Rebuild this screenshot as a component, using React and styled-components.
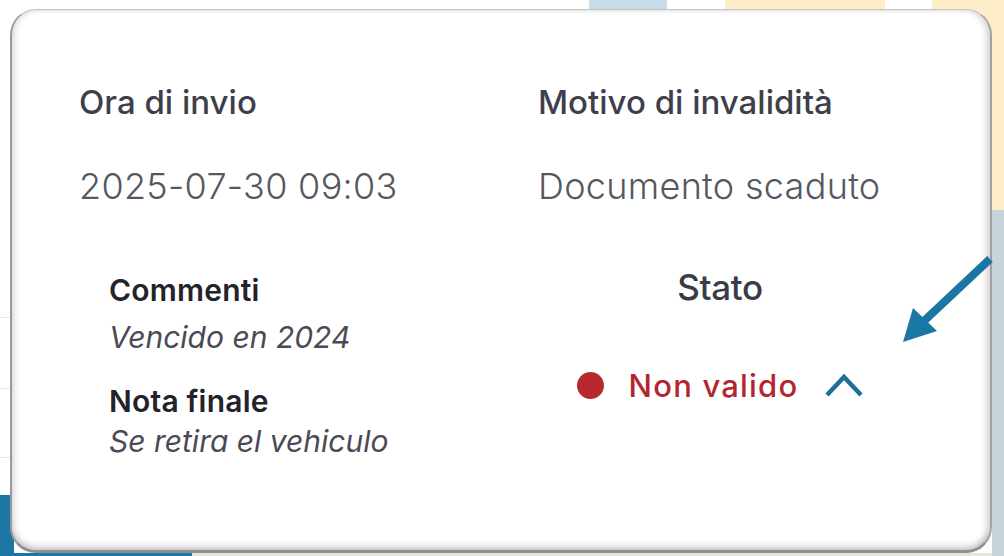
import React from 'react'
import styled, { createGlobalStyle } from 'styled-components'

const GlobalStyle = createGlobalStyle`
  html {
    background:
      linear-gradient(#c6dde9, #c6dde9) 589px 0 / 78px 9px no-repeat,
      linear-gradient(#fdedc9, #fdedc9) 725px 0 / 160px 9px no-repeat,
      linear-gradient(#fdedc9, #fdedc9) 932px 0 / 72px 210px no-repeat,
      linear-gradient(#c9d3da, #c9d3da) 992px 210px / 12px 346px no-repeat,
      linear-gradient(#e2ebf1, #e2ebf1) 0 317px / 12px 1px no-repeat,
      linear-gradient(#e2ebf1, #e2ebf1) 0 388px / 12px 1px no-repeat,
      linear-gradient(#e2ebf1, #e2ebf1) 0 457px / 12px 1px no-repeat,
      linear-gradient(#1c78a2, #1c78a2) 0 495px / 14px 61px no-repeat,
      linear-gradient(#1c78a2, #1c78a2) 0 553px / 192px 3px no-repeat,
      linear-gradient(#e6e4de, #e6e4de) 192px 553px / 812px 3px no-repeat,
      #ffffff;
  }
  body {
    margin: 0;
    font-family: Inter, "Noto Sans", sans-serif;
  }
`

const Page = styled.div`
  position: relative;
  width: 1004px;
  height: 556px;
  overflow: hidden;
`

const Card = styled.section`
  box-sizing: border-box;
  margin: 9px 0 0 10px;
  width: 982px;
  height: 544px;
  background: #fff;
  border-radius: 26px;
  border: 1px solid #c4c4c4;
  border-left: 2px solid #9b9b9b;
  border-right: 2px solid #a2a2a2;
  border-bottom: 3px solid #8f8f8f;
  box-shadow:
    inset 5px 0 6px -2px rgba(0, 0, 0, 0.12),
    inset -6px 0 6px -2px rgba(0, 0, 0, 0.14),
    inset 0 -7px 7px -3px rgba(0, 0, 0, 0.16),
    inset 0 3px 4px -2px rgba(0, 0, 0, 0.05);
  padding: 73px 0 0 67px;
`

const TopGrid = styled.div`
  display: grid;
  grid-template-columns: 459px 1fr;
`

const Field = styled.div`
  display: flex;
  flex-direction: column;
`

const Label = styled.div`
  font-size: 33px;
  line-height: 1.2;
  font-weight: 500;
  color: #3e3f4b;
`

const Value = styled.div`
  margin-top: 42px;
  font-size: 36px;
  line-height: 1.2;
  font-weight: 300;
  color: #555860;
  letter-spacing: 0.3px;
`

const BottomGrid = styled.div`
  display: grid;
  grid-template-columns: 459px 364px;
  margin-top: 64px;
`

const Notes = styled.div`
  padding-left: 30px;
  display: flex;
  flex-direction: column;
`

const NoteLabel = styled.div`
  font-size: 30px;
  line-height: 1.2;
  font-weight: 600;
  color: #23232b;
  letter-spacing: 0.2px;
  margin-top: ${p => p.$gap || 0}px;
`

const NoteValue = styled.div`
  font-size: 30px;
  line-height: 1.2;
  font-style: italic;
  font-weight: 400;
  color: #4a4a55;
  margin-top: ${p => p.$gap || 0}px;
`

const StatusCol = styled.div`
  display: flex;
  flex-direction: column;
  align-items: center;
  margin-top: -6px;
`

const StatusTitle = styled.div`
  font-size: 35px;
  line-height: 1.2;
  font-weight: 500;
  color: #3a3b47;
  letter-spacing: -0.4px;
`

const StatusRow = styled.div`
  margin-top: 59px;
  display: flex;
  align-items: center;
`

const Dot = styled.span`
  width: 27px;
  height: 27px;
  border-radius: 50%;
  background: #b7282f;
  margin-right: 25px;
`

const StatusText = styled.span`
  font-size: 31px;
  line-height: 1.2;
  font-weight: 500;
  color: #b3262f;
  letter-spacing: 1.2px;
  margin-right: 27px;
`

const Arrow = styled.svg`
  position: absolute;
  left: 898px;
  top: 252px;
`

function Chevron() {
  return (
    <svg width="38" height="24" viewBox="0 0 38 24">
      <polyline points="2,22 19,4 36,22" fill="none" stroke="#1f6e98" strokeWidth="4.5" />
    </svg>
  )
}

function App() {
  return (
    <Page>
      <GlobalStyle />
      <Card>
        <TopGrid>
          <Field>
            <Label>Ora di invio</Label>
            <Value>2025-07-30 09:03</Value>
          </Field>
          <Field>
            <Label>Motivo di invalidità</Label>
            <Value>Documento scaduto</Value>
          </Field>
        </TopGrid>
        <BottomGrid>
          <Notes>
            <NoteLabel>Commenti</NoteLabel>
            <NoteValue $gap={11}>Vencido en 2024</NoteValue>
            <NoteLabel $gap={28}>Nota finale</NoteLabel>
            <NoteValue $gap={4}>Se retira el vehiculo</NoteValue>
          </Notes>
          <StatusCol>
            <StatusTitle>Stato</StatusTitle>
            <StatusRow>
              <Dot />
              <StatusText>Non valido</StatusText>
              <Chevron />
            </StatusRow>
          </StatusCol>
        </BottomGrid>
      </Card>
      <Arrow width="100" height="95" viewBox="0 0 100 95">
        <line x1="92" y1="7" x2="26" y2="69" stroke="#1a77a3" strokeWidth="8" />
        <polygon points="5,90 15,56 39,79" fill="#1a77a3" />
      </Arrow>
    </Page>
  )
}

export default App
